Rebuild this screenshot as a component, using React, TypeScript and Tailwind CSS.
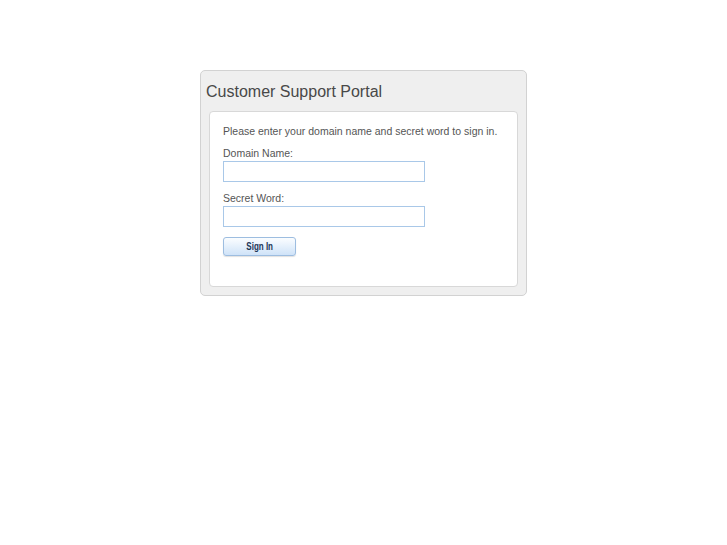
export default function App() {
  return (
    <div className="min-h-[545px] bg-white pt-[70px] font-['Liberation_Sans',Arial,sans-serif]">
      <div className="mx-auto w-[327px] rounded-[5px] border border-[#d2d2d2] bg-[#efefef] px-[8px] pb-[8px]">
        <h1 className="-ml-[3px] pt-[11px] pb-[9px] text-[16px] leading-[20px] text-[#484848]">
          Customer Support Portal
        </h1>
        <div className="h-[176px] rounded-[4px] border border-[#d8d8d8] bg-white px-[13px] pt-[12px]">
          <p className="text-[10.5px] leading-[14px] whitespace-nowrap text-[#555]">
            Please enter your domain name and secret word to sign in.
          </p>
          <form className="mt-[8px] flex flex-col">
            <label className="text-[10.5px] leading-[14px] text-[#555]">Domain Name:</label>
            <input
              type="text"
              className="mt-[1px] h-[21px] w-[202px] border border-[#a9c8e8] bg-white outline-none"
            />
            <label className="mt-[9px] text-[10.5px] leading-[14px] text-[#555]">Secret Word:</label>
            <input
              type="password"
              className="mt-[1px] h-[21px] w-[202px] border border-[#a9c8e8] bg-white outline-none"
            />
            <button
              type="button"
              className="mt-[10px] flex h-[19px] w-[73px] items-center justify-center rounded-[3px] border border-[#9dbde0] bg-gradient-to-b from-[#fbfdff] to-[#cfe3f8] text-[10px] font-bold text-[#1c3557] shadow-[0_1px_1px_rgba(0,0,0,0.12)]"
            >
              <span className="inline-block scale-x-80">Sign In</span>
            </button>
          </form>
        </div>
      </div>
    </div>
  )
}
